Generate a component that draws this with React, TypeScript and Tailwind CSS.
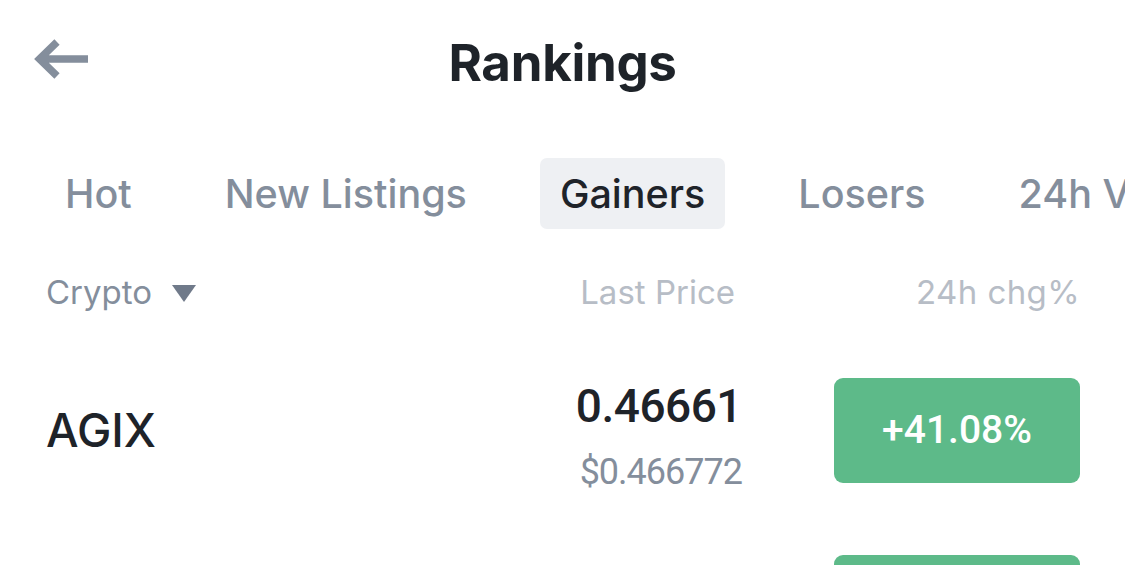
import React from 'react';

const tabs = ['Hot', 'New Listings', 'Gainers', 'Losers', '24h Vol'];

export default function App() {
  const active = 'Gainers';

  return (
    <div className="w-[1125px] h-[565px] overflow-hidden bg-white font-['Inter','Noto_Sans',sans-serif] text-[#1e2329]">
      {/* header */}
      <div className="grid grid-cols-[1fr_auto_1fr] items-center h-[124px]">
        <div className="pl-[33px] pb-[6px]">
          <svg width="58" height="44" viewBox="0 0 58 44" fill="none">
            <path d="M55 22H8M24 5L6.5 22L24 39" stroke="#848e9c" strokeWidth="7.5" />
          </svg>
        </div>
        <h1 className="text-[51px] font-bold tracking-[-0.3px] leading-none">Rankings</h1>
        <div />
      </div>

      {/* tabs */}
      <div className="mt-[34px] flex gap-[53px] pl-[45px] whitespace-nowrap overflow-hidden">
        {tabs.map((t) => (
          <div
            key={t}
            className={
              t === active
                ? 'h-[71px] px-[20px] pt-[3px] flex items-center rounded-[7px] bg-[#eef0f3] text-[#1e2329] text-[39.5px] font-medium'
                : 'h-[71px] px-[20px] pt-[3px] flex items-center text-[#848e9c] text-[39.5px] font-medium'
            }
          >
            {t}
          </div>
        ))}
      </div>

      {/* column headers */}
      <div className="mt-[44px] flex items-center pl-[46px] pr-[45px] h-[40px] text-[33px]">
        <div className="flex-1 flex items-center gap-[20px] text-[#848e9c]">
          <span>Crypto</span>
          <svg width="24" height="17" viewBox="0 0 24 17">
            <path d="M0 0H24L12 17Z" fill="#707a8a" />
          </svg>
        </div>
        <div className="w-[200px] text-right pr-[7px] text-[#b7bdc6]">Last Price</div>
        <div className="ml-[92px] w-[246px] text-right tracking-[0.4px] text-[#b7bdc6]">24h chg%</div>
      </div>

      {/* rows */}
      <div className="mt-[65px] flex items-center pl-[46px] pr-[45px] h-[105px]">
        <div className="flex-1 text-[46px] font-medium">AGIX</div>
        <div className="w-[200px] pt-[13px] flex flex-col items-end font-['Roboto',sans-serif]">
          <span className="text-[46px] font-medium leading-[50px] tracking-[-0.5px]">0.46661</span>
          <span className="mt-[19px] text-[36px] leading-[44px] text-[#848e9c] tracking-[-1px]">$0.466772</span>
        </div>
        <div className="ml-[92px] w-[246px] h-[105px] rounded-[9px] bg-[#5dba89] flex items-center justify-center text-white text-[39px] font-medium font-['Roboto',sans-serif]">
          +41.08%
        </div>
      </div>

      <div className="mt-[72px] flex items-center pl-[46px] pr-[45px] h-[105px]">
        <div className="flex-1" />
        <div className="w-[200px]" />
        <div className="ml-[92px] w-[246px] h-[105px] rounded-[9px] bg-[#5dba89]" />
      </div>
    </div>
  );
}
